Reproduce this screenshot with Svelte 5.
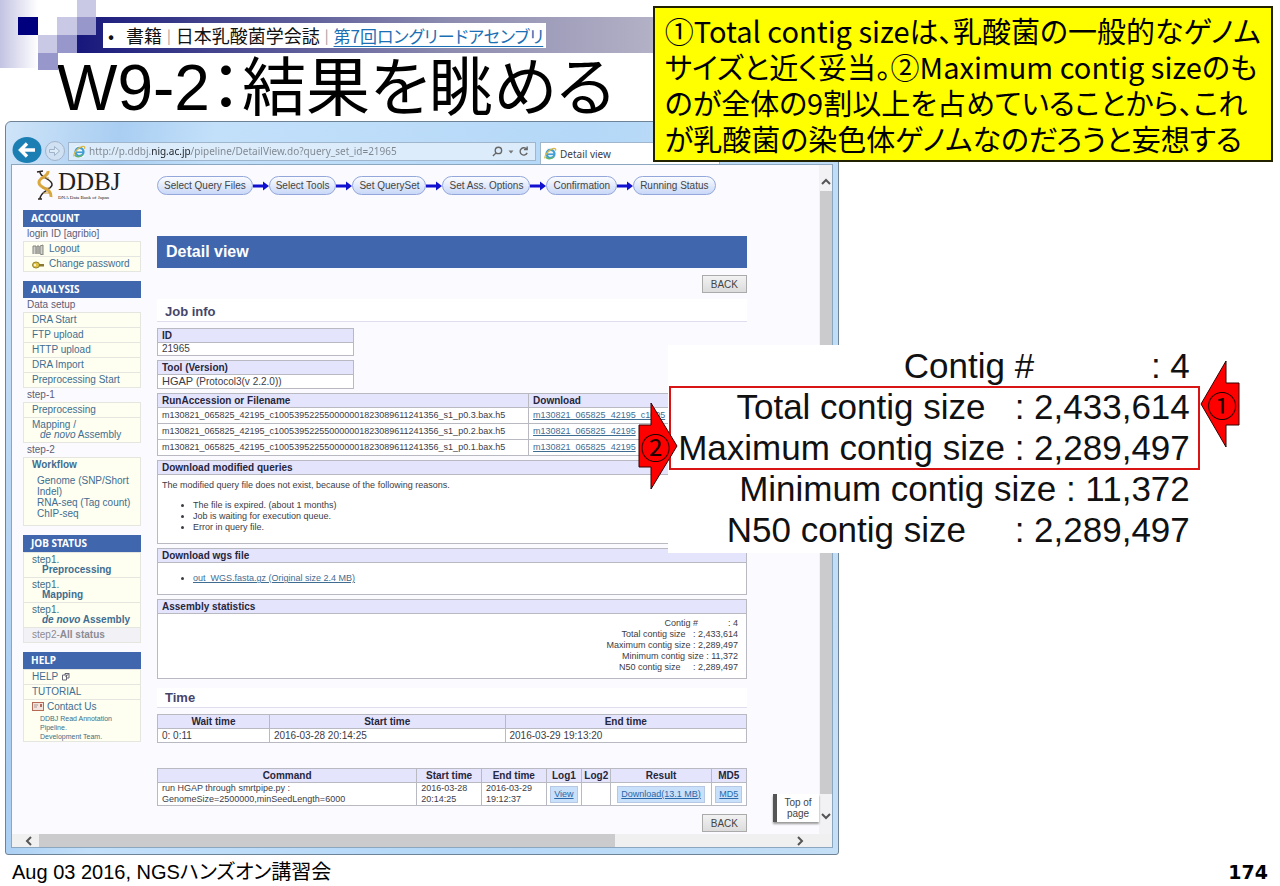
<script>
  const steps = ['Select Query Files', 'Select Tools', 'Set QuerySet', 'Set Ass. Options', 'Confirmation', 'Running Status'];
  const files = [
    { name: 'm130821_065825_42195_c100539522550000001823089611241356_s1_p0.3.bax.h5', link: 'm130821_065825_42195_c1005' },
    { name: 'm130821_065825_42195_c100539522550000001823089611241356_s1_p0.2.bax.h5', link: 'm130821_065825_42195' },
    { name: 'm130821_065825_42195_c100539522550000001823089611241356_s1_p0.1.bax.h5', link: 'm130821_065825_42195' }
  ];
  const stats = [
    'Contig #            : 4',
    'Total contig size   : 2,433,614',
    'Maximum contig size : 2,289,497',
    'Minimum contig size : 11,372',
    'N50 contig size     : 2,289,497'
  ];
  const setup = ['DRA Start', 'FTP upload', 'HTTP upload', 'DRA Import', 'Preprocessing Start'];
  let url = 'http://p.ddbj.nig.ac.jp/pipeline/DetailView.do?query_set_id=21965';
</script>

{#snippet ie()}
  <svg class="ie" viewBox="0 0 14 14" aria-hidden="true">
    <rect x="3" y="1" width="9" height="12" fill="#f3f6f8" />
    <circle cx="7" cy="7.4" r="4.3" fill="none" stroke="#3f9fd6" stroke-width="2.4" />
    <path d="M3.5 7.8h7.5" stroke="#3f9fd6" stroke-width="1.8" />
    <path d="M1.2 12.3C0 10 4 3.500 9.500 1.800C12 1 13.200 2 12.300 4" fill="none" stroke="#d9b945" stroke-width="1.400" />
    <path d="M2 11c2 2.500 6 2 8.500-.5" fill="none" stroke="#63b36c" stroke-width="1.500" />
  </svg>
{/snippet}

{#snippet statLines()}
  {#each stats as line}<div class="line">{line}</div>{/each}
{/snippet}

<div class="slide">
  <svg class="deco" viewBox="0 0 120 72" aria-hidden="true">
    <defs>
      <linearGradient id="fade"><stop offset="0" stop-color="#c3c3e3" /><stop offset="1" stop-color="#fff" /></linearGradient>
    </defs>
    <rect width="38" height="68" fill="url(#fade)" />
    <rect x="18" y="17" width="20" height="18" fill="#00007f" />
    <rect x="77" y="0" width="19" height="17" fill="#c9c9e6" />
    <rect x="77" y="17" width="19" height="18" fill="#9797cb" />
    <rect x="57" y="17" width="20" height="18" fill="#c9c9e6" />
    <rect x="38" y="35" width="19" height="18" fill="#c9c9e6" />
    <rect x="57" y="35" width="20" height="18" fill="#9797cb" />
    <rect x="38" y="53" width="20" height="17" fill="#9797cb" />
  </svg>

  <header>
    <div class="band">
      <nav class="crumbs" aria-label="書籍">
        <span class="dot">•</span><span>書籍</span><i>|</i><span>日本乳酸菌学会誌</span><i>|</i><a href="#assembly">第7回ロングリードアセンブリ</a>
      </nav>
    </div>
    <h1>W9-2：結果を眺める</h1>
  </header>

  <div class="window">
    <div class="toolbar">
      <button class="nav back" aria-label="Back">
        <svg viewBox="0 0 30 26"><ellipse cx="15" cy="13" rx="14.500" ry="13" fill="#1c7fb3" /><path d="M23 13H9M15 6.500L8.500 13l6.500 6.500" fill="none" stroke="#fff" stroke-width="3.400" /></svg>
      </button>
      <button class="nav fwd" aria-label="Forward">
        <svg viewBox="0 0 22 22"><circle cx="11" cy="11" r="9.500" fill="#cfe1f3" stroke="#a3b4c8" /><path d="M5.500 9.500h5v-3l5 4.500-5 4.500v-3h-5z" fill="#dcebf8" stroke="#9fb2c8" /></svg>
      </button>
      <div class="address">
        {@render ie()}
        <input type="text" aria-label="Address" bind:value={url} spellcheck="false" />
        <button aria-label="Search"><svg viewBox="0 0 12 12"><circle cx="7" cy="4.800" r="3.500" /><path d="M4.500 7.500L1 11" /></svg></button>
        <button class="tiny" aria-label="Address list"><svg viewBox="0 0 6 6"><path d="M.5 1.500h5L3 4.500z" fill="#777" stroke="none" /></svg></button>
        <button aria-label="Reload"><svg viewBox="0 0 12 12"><path d="M9.500 3.500A4 4 0 1 0 10 7.500M10 .5v3.500H6.500" /></svg></button>
      </div>
      <div class="tab">{@render ie()}<span>Detail view</span></div>
    </div>

    <div class="viewport">
      <div class="scroller">
        <aside>
          <div class="logo">
            <svg viewBox="0 0 22 32" aria-hidden="true">
              <path d="M5 3c0 6 13 7 12 13-1 5-12 6-12 14" fill="none" stroke="#2c2620" stroke-width="1.500" />
              <path d="M13 2c1 6-10 6-9 12C5 20 17 19 16 28" fill="none" stroke="#dba83e" stroke-width="3" />
              <path d="M6 9h8M7 19h8M8 24h7" stroke="#c89a3c" stroke-width="1" />
              <path d="M2 3l6-1M3 30h4" stroke="#2c2620" stroke-width="1.500" />
            </svg>
            <div><b>DDBJ</b><small>DNA Data Bank of Japan</small></div>
          </div>

          <h2>ACCOUNT</h2>
          <p class="label">login ID [agribio]</p>
          <ul>
            <li class="icon"><svg viewBox="0 0 12 11" aria-hidden="true"><path d="M1 10V2h3v8M5 10V2h2v8M8 10V2l3-1v10z" fill="#d0d0cc" stroke="#85857e" /></svg><a href="#logout">Logout</a></li>
            <li class="icon"><svg viewBox="0 0 12 11" aria-hidden="true"><ellipse cx="4" cy="6" rx="3.500" ry="3" fill="#e0c244" stroke="#91812c" /><path d="M7 5h5v2.500H7z" fill="#8c7a30" /><circle cx="3" cy="6" r="1" fill="#fff" /></svg><a href="#password">Change password</a></li>
          </ul>

          <h2>ANALYSIS</h2>
          <p class="label">Data setup</p>
          <ul>
            {#each setup as item}<li><a href="#setup">{item}</a></li>{/each}
          </ul>
          <p class="label">step-1</p>
          <ul>
            <li><a href="#pre">Preprocessing</a></li>
            <li class="double"><a href="#mapping">Mapping /<br /><span class="in"><em>de novo</em> Assembly</span></a></li>
          </ul>
          <p class="label">step-2</p>
          <ul>
            <li class="flow">
              <a href="#workflow"><b>Workflow</b></a>
              <div>
                <a href="#snp">Genome (SNP/Short Indel)</a><br /><a href="#rna">RNA-seq (Tag count)</a><br /><a href="#chip">ChIP-seq</a>
              </div>
            </li>
          </ul>

          <h2>JOB STATUS</h2>
          <ul class="status">
            <li class="double">step1.<br /><a class="in" href="#s1"><b>Preprocessing</b></a></li>
            <li class="double">step1.<br /><a class="in" href="#s2"><b>Mapping</b></a></li>
            <li class="double">step1.<br /><a class="in" href="#s3"><b><em>de novo</em> Assembly</b></a></li>
            <li class="off">step2-<b>All status</b></li>
          </ul>

          <h2>HELP</h2>
          <ul>
            <li><a href="#help">HELP</a> <svg class="ext" viewBox="0 0 9 9" aria-hidden="true"><path d="M1.500 3h4v5h-4zM4 3V1.500h4V6H6M4.500 5L8 1.500" fill="none" stroke="#667" /></svg></li>
            <li><a href="#tutorial">TUTORIAL</a></li>
            <li class="contact">
              <svg viewBox="0 0 12 9" aria-hidden="true"><rect x=".5" y=".5" width="11" height="8" fill="#f2e4dc" stroke="#b56a58" /><path d="M2 3h4M2 5h3" stroke="#a99" /><rect x="8" y="2" width="2" height="3" fill="#b56a58" /></svg><a href="#contact">Contact Us</a>
              <small>DDBJ Read Annotation Pipeline.<br />Development Team.</small>
            </li>
          </ul>
        </aside>

        <main>
          <nav class="steps" aria-label="Steps">
            {#each steps as step, i}
              {#if i}<svg viewBox="0 0 16 10" aria-hidden="true"><path d="M0 3.500h10V.5L16 5l-6 4.500v-3H0z" fill="#1111cf" /></svg>{/if}
              <a href="#step">{step}</a>
            {/each}
          </nav>
          <h2 class="title">Detail view</h2>
          <div class="right"><button class="push">BACK</button></div>

          <h3>Job info</h3>
          <table class="short"><thead><tr><th>ID</th></tr></thead><tbody><tr><td>21965</td></tr></tbody></table>
          <table class="short"><thead><tr><th>Tool (Version)</th></tr></thead><tbody><tr><td><span class="tool">HGAP</span> (Protocol3(v 2.2.0))</td></tr></tbody></table>
          <table class="runs">
            <thead><tr><th class="wide">RunAccession or Filename</th><th>Download</th></tr></thead>
            <tbody>
              {#each files as f}<tr><td>{f.name}</td><td><a href="#file">{f.link}</a></td></tr>{/each}
            </tbody>
          </table>
          <section>
            <h4>Download modified queries</h4>
            <div class="queries">
              <p>The modified query file does not exist, because of the following reasons.</p>
              <ul><li>The file is expired. (about 1 months)</li><li>Job is waiting for execution queue.</li><li>Error in query file.</li></ul>
            </div>
          </section>
          <section>
            <h4>Download wgs file</h4>
            <div class="wgs"><ul><li><a href="#wgs">out_WGS.fasta.gz (Original size 2.4 MB)</a></li></ul></div>
          </section>
          <section>
            <h4>Assembly statistics</h4>
            <div class="stats">{@render statLines()}</div>
          </section>

          <h3 class="time">Time</h3>
          <table class="center">
            <colgroup><col class="w19" /><col class="w40" /><col /></colgroup>
            <thead><tr><th>Wait time</th><th>Start time</th><th>End time</th></tr></thead>
            <tbody><tr><td>0: 0:11</td><td>2016-03-28 20:14:25</td><td>2016-03-29 19:13:20</td></tr></tbody>
          </table>
          <table class="center command">
            <colgroup><col class="w44" /><col class="w11" /><col class="w11" /><col class="w6" /><col class="w5" /><col /><col class="w6" /></colgroup>
            <thead><tr><th>Command</th><th>Start time</th><th>End time</th><th>Log1</th><th>Log2</th><th>Result</th><th>MD5</th></tr></thead>
            <tbody>
              <tr>
                <td>run HGAP through smrtpipe.py :<br />GenomeSize=2500000,minSeedLength=6000</td>
                <td>2016-03-28<br />20:14:25</td>
                <td>2016-03-29<br />19:12:37</td>
                <td class="act"><a class="link" href="#view">View</a></td>
                <td></td>
                <td class="act"><a class="link" href="#download">Download(13.1 MB)</a></td>
                <td class="act"><a class="link" href="#md5">MD5</a></td>
              </tr>
            </tbody>
          </table>
          <div class="right"><button class="push">BACK</button></div>
        </main>
        <a class="top" href="#top">Top of<br />page</a>
      </div>
      <div class="vbar">
        <svg viewBox="0 0 10 7" aria-hidden="true"><path d="M1 6l4-4 4 4" /></svg>
        <div class="thumb"></div>
        <svg viewBox="0 0 10 7" aria-hidden="true"><path d="M1 1l4 4 4-4" /></svg>
      </div>
    </div>
    <div class="hbar">
      <svg viewBox="0 0 7 10" aria-hidden="true"><path d="M6 1L2 5l4 4" /></svg>
      <div class="thumb"></div>
      <svg viewBox="0 0 7 10" aria-hidden="true"><path d="M1 1l4 4-4 4" /></svg>
    </div>
  </div>

  <footer><span>Aug 03 2016, NGSハンズオン講習会</span><b>174</b></footer>

  <p class="note">①Total contig sizeは、乳酸菌の一般的なゲノム<br />サイズと近く妥当。②Maximum contig sizeのも<br />のが全体の9割以上を占めていることから、これ<br />が乳酸菌の染色体ゲノムなのだろうと妄想する</p>

  <div class="zoomed">
    {@render statLines()}
    <div class="frame"></div>
    <div class="arrow one"><svg viewBox="0 0 40 88" aria-hidden="true"><path d="M1 44L26 1v22h13v42H26v22z" /></svg><span>①</span></div>
    <div class="arrow two"><svg viewBox="0 0 40 88" aria-hidden="true"><path d="M39 44L13 1v22H1v42h12v22z" /></svg><span>②</span></div>
  </div>
</div>

<style>
  :global(body) { margin: 0; background: #fff; }
  .slide, .slide * { box-sizing: border-box; }
  .slide {
    position: relative;
    overflow: hidden;
    min-height: 100vh;
    font: 10px/11px "Liberation Sans", "Noto Sans CJK JP", sans-serif;
    color: #3c3c46;
  }
  ul, p, h1, h2, h3, h4 { margin: 0; padding: 0; }
  ul { list-style: none; }
  button { font: inherit; border: 0; padding: 0; background: none; color: inherit; }
  a { color: #3f6d92; text-decoration: none; }
  svg { display: block; flex: none; }

  .deco { position: absolute; left: 0; top: 0; width: 120px; height: 72px; }
  header { padding-top: 17px; height: 121px; }
  .band {
    width: 45%;
    height: 36px;
    margin-left: 77px;
    padding: 6px 0 0 26px;
    background: linear-gradient(90deg, #17177c, #3d3d8b 20%, #8d8cb0 65%, #b3b1c6);
  }
  .crumbs {
    display: inline-flex;
    align-items: center;
    height: 25px;
    padding: 0 3px 0 5px;
    background: #fff;
    color: #111;
    font: 18px/25px "Noto Sans CJK JP", sans-serif;
    font-feature-settings: "palt";
    white-space: nowrap;
  }
  .crumbs .dot { width: 18px; }
  .crumbs i { padding: 0 5px; font-style: normal; font-size: 14px; color: #999; }
  .crumbs a { font-size: 17px; color: #1b6fb5; text-decoration: underline; text-underline-offset: 3px; }
  h1 {
    margin-left: 57px;
    font: 400 64px/70px "Liberation Sans", "Noto Sans CJK JP", sans-serif;
    font-feature-settings: "palt";
    color: #000;
    white-space: nowrap;
  }

  .window {
    width: calc(65% + 2px);
    margin-left: 5px;
    padding: 0 5px 6px;
    border: 1px solid #6f8396;
    border-radius: 6px 6px 3px 3px;
    background: linear-gradient(100deg, #cfe4f8, #a9cef2 12%, #c3e0fa 22%, #b5d8f8 60%, #c4dff6);
  }
  .toolbar { display: flex; align-items: flex-end; height: 42px; }
  .nav svg { width: 100%; }
  .nav.back { width: 30px; height: 26px; margin: 0 2px 1px 1px; }
  .nav.back svg { height: 26px; }
  .nav.fwd { width: 22px; height: 22px; margin-bottom: 2px; }
  .address {
    display: flex;
    align-items: center;
    flex: 0 1 468px;
    height: 19px;
    margin: 0 4px 3px 2px;
    padding: 0 4px;
    background: #dcecfb;
    border: 1px solid #9fb6cc;
  }
  .address input {
    flex: 1;
    min-width: 0;
    border: 0;
    padding: 0 3px;
    color: transparent;
    background: linear-gradient(90deg, #7d858e 65px, #1c2024 65px, #1c2024 105px, #7d858e 105px);
    background-clip: text;
    -webkit-background-clip: text;
    font: 10px/15px "Noto Sans", sans-serif;
  }
  .address button { width: 13px; }
  .address button svg { width: 11px; height: 11px; fill: none; stroke: #666; stroke-width: 1.5; }
  .address .tiny svg { width: 6px; height: 6px; margin-left: 3px; }
  .ie { width: 13px; height: 13px; }
  .tab {
    display: flex;
    flex: 0 1 180px;
    align-items: center;
    gap: 3px;
    height: 22px;
    padding: 0 3px;
    background: #fff;
    border: 1px solid #9fb6cc;
    border-bottom: 0;
    font: 10px/18px "Noto Sans", sans-serif;
  }

  .viewport { display: flex; border: 1px solid #8ba6bf; border-bottom: 0; background: #fbfaff; }
  .scroller { position: relative; flex: 1; min-width: 0; display: flex; gap: 16px; padding: 0 72px 2px 11px; }
  .vbar { width: 13px; display: flex; flex-direction: column; align-items: center; gap: 6px; padding: 13px 0 14px; background: #f2f2f4; }
  .vbar svg { width: 10px; height: 7px; }
  .vbar .thumb { flex: 1; width: 12px; margin-bottom: 13px; background: #cbcbcd; }
  .hbar { display: flex; align-items: center; height: 14px; padding: 0 28px 0 13px; background: #f0f0f1; border: solid #8ba6bf; border-width: 0 1px 1px; }
  .hbar svg { width: 7px; height: 10px; }
  .hbar .thumb { flex: 0 0 74%; height: 13px; margin: 0 auto 0 7px; background: #cbcbcd; }
  .vbar svg, .hbar svg { fill: none; stroke: #555; stroke-width: 2; }

  aside { flex: 0 0 118px; }
  .logo { display: flex; gap: 1px; height: 45px; padding: 4px 0 0 12px; }
  .logo svg { width: 22px; height: 32px; }
  .logo b { display: block; font: 25px/26px "Liberation Serif", serif; color: #222; }
  .logo small { display: block; font: 5px/5px "Liberation Serif", serif; white-space: nowrap; color: #222; }
  aside h2 {
    height: 17px;
    padding-left: 8px;
    background: #4067ae;
    color: #fff;
    font: bold 10px/17px "Noto Sans", sans-serif;
  }
  aside ul + h2 { margin-top: 9px; }
  .label { padding-left: 4px; line-height: 14px; color: #5d5d74; }
  aside ul { border: 1px solid #e6e6e0; border-top: 0; background: #fefff0; }
  aside li { padding-left: 8px; line-height: 14px; border-top: 1px solid #e6e6e0; color: #3f6d86; white-space: nowrap; }
  aside li.icon { display: flex; align-items: center; gap: 5px; }
  li.icon svg { width: 12px; height: 11px; }
  aside .double { padding-top: 2px; padding-bottom: 2px; line-height: 10px; }
  .in { padding-left: 8px; }
  .status .in { padding-left: 10px; }
  .flow div { padding: 3px 0 6px 5px; line-height: 11px; white-space: normal; }
  .off { background: #f2f2f6; color: #8b8b93; }
  .ext { display: inline-block; width: 9px; height: 9px; vertical-align: -1px; }
  .contact svg { display: inline-block; width: 12px; height: 9px; margin-right: 3px; vertical-align: -1px; }
  .contact small { display: block; padding-left: 8px; font-size: 7px; line-height: 9px; white-space: normal; }

  main { flex: 1; min-width: 0; padding-top: 11px; }
  .steps { display: flex; align-items: center; }
  .steps a {
    height: 19px;
    padding: 0 6px;
    border: 1px solid #93a7da;
    border-radius: 10px;
    background: linear-gradient(#fbfcff, #c9d8f8);
    line-height: 17px;
    color: #444;
    white-space: nowrap;
  }
  .steps svg { width: 16px; height: 10px; }
  .title { height: 32px; margin: 41px 0 7px; padding-left: 9px; background: #4067ae; color: #fff; font: bold 16px/32px "Liberation Sans", sans-serif; }
  .right { display: flex; justify-content: flex-end; }
  .push { height: 18px; padding: 0 8px; border: 1px solid #aaa; background: linear-gradient(#f2f2f2, #dcdcdc); color: #444; }
  h3 { height: 23px; margin: 6px 0; padding-left: 8px; border-bottom: 1px solid #dedeee; background: #fff; color: #45456b; font: bold 13px/25px "Liberation Sans", sans-serif; }
  table { width: 100%; border-collapse: collapse; table-layout: fixed; margin-bottom: 4px; background: #fff; }
  .short { width: 197px; }
  th, td { padding: 0 4px; border: 1px solid #b9b9c2; text-align: left; font-size: 10px; line-height: 13px; }
  th { height: 14px; background: #e4e4fc; color: #26263c; }
  .short td { line-height: 12px; }
  .tool { font-size: 11px; }
  .wide { width: 63%; }
  .runs td { height: 16px; font-size: 9px; line-height: 15px; white-space: nowrap; }
  .runs a, .wgs a { text-decoration: underline; }
  section { border: 1px solid #b9b9c2; background: #fff; margin-bottom: 4px; }
  h4 { padding-left: 4px; border-bottom: 1px solid #b9b9c2; background: #e4e4fc; color: #26263c; font: bold 10px/13px "Liberation Sans", sans-serif; }
  section ul { list-style: disc; padding-left: 31px; }
  .queries { height: 68px; padding: 5px 4px; font-size: 9px; }
  .queries ul { padding-top: 9px; }
  .wgs { height: 31px; padding: 10px 4px; font-size: 9px; }
  .stats { height: 64px; padding: 4px 8px; font-size: 9px; text-align: right; }
  .line { white-space: pre; }
  h3.time { height: 20px; margin: 9px 0 6px; line-height: 20px; }
  .center th { text-align: center; padding: 0; }
  .command { margin: 25px 0 8px; }
  .command td { height: 23px; font-size: 9px; line-height: 11px; padding-right: 0; }
  .command .act { padding: 0; text-align: center; }
  .link { display: inline-block; padding: 2px 3px; border: 1px solid #b7c8e4; background: #c9e0fa; color: #2867a8; text-decoration: underline; }
  .w19 { width: 19%; } .w40 { width: 40%; } .w44 { width: 44%; } .w11 { width: 11%; } .w6 { width: 6%; } .w5 { width: 5%; }
  .top {
    position: absolute;
    right: 0;
    bottom: 12px;
    width: 46px;
    padding: 3px 0;
    border-left: 4px solid #555;
    background: #fff;
    box-shadow: 0 2px 2px #999;
    color: #444;
    text-align: center;
  }

  footer { display: flex; justify-content: space-between; padding: 4px 12px 0; color: #000; font-size: 20px; line-height: 26px; }
  footer span { font-feature-settings: "palt"; }
  footer b { font: bold 19px/26px "DejaVu Sans", sans-serif; }

  .note {
    position: absolute;
    left: 51%;
    right: 7px;
    top: 6px;
    padding: 4px 10px;
    border: 2px solid #222200;
    background: #ff0;
    color: #000;
    font: 29px/36px "Noto Sans CJK JP", sans-serif;
    font-feature-settings: "palt";
    white-space: nowrap;
  }
  .zoomed {
    position: absolute;
    left: 52.2%;
    top: 345px;
    padding: 0 10px 3px;
    background: #fff;
    color: #111;
    font-size: 35px;
    line-height: 41px;
    text-align: right;
  }
  .frame { position: absolute; left: 1px; right: 0; top: 41px; height: 84px; border: 2px solid #d81414; }
  .arrow { position: absolute; display: flex; align-items: center; justify-content: center; width: 40px; height: 88px; }
  .arrow svg { position: absolute; inset: 0; width: 40px; height: 88px; }
  .arrow path { fill: #f00; stroke: #300; stroke-width: 1; }
  .arrow span { position: relative; color: #200; font: 30px/40px "Noto Sans CJK JP", sans-serif; }
  .one { left: 100%; top: 15px; padding-left: 4px; }
  .two { right: 100%; top: 57px; margin-right: -10px; padding-right: 6px; }
</style>
